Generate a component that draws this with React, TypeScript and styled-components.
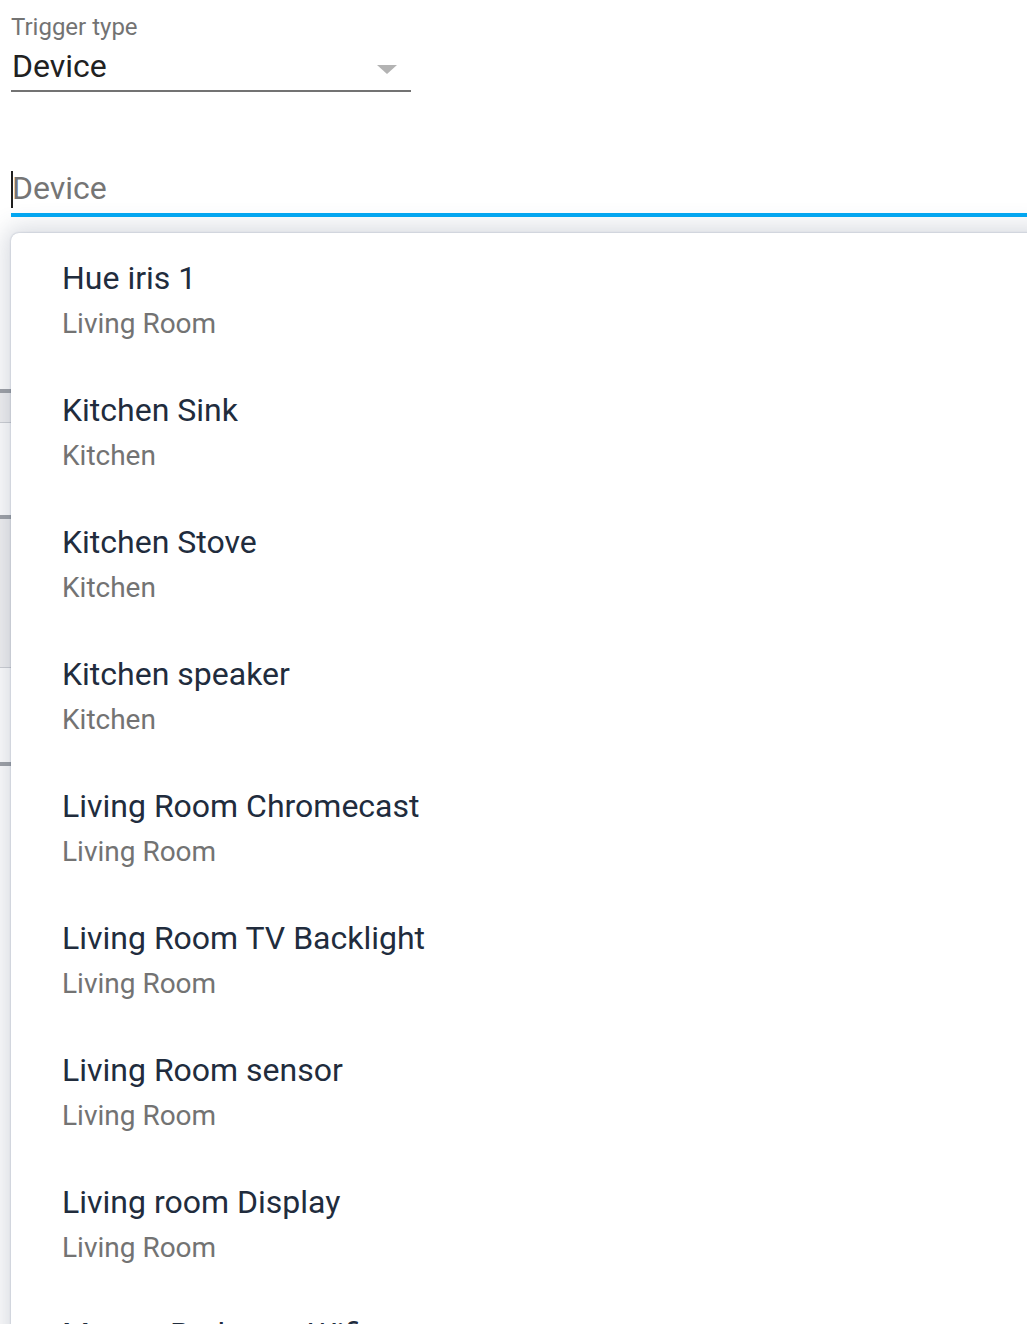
import React from "react";
import styled, { createGlobalStyle } from "styled-components";

const GlobalStyle = createGlobalStyle`
  html, body {
    margin: 0;
    padding: 0;
    background: #ffffff;
    overflow: hidden;
  }
  body {
    font-family: Roboto, "Noto Sans", "Liberation Sans", sans-serif;
    -webkit-font-smoothing: antialiased;
  }
`;

const Page = styled.div`
  position: relative;
  width: 100%;
  height: 1324px;
  overflow: hidden;
`;

const Form = styled.div`
  position: relative;
  z-index: 2;
  padding: 15px 0 0 11px;
`;

const SelectField = styled.div`
  width: 400px;
`;

const FieldLabel = styled.div`
  font-size: 24px;
  line-height: 24px;
  color: #737373;
`;

const SelectRow = styled.div`
  display: flex;
  justify-content: space-between;
  align-items: flex-start;
  margin-top: 7px;
  padding: 0 14px 4px 1px;
  border-bottom: 2px solid #737373;
`;

const SelectValue = styled.div`
  font-size: 32px;
  line-height: 40px;
  color: #212121;
`;

const Arrow = styled.span`
  width: 0;
  height: 0;
  margin-top: 19px;
  border-left: 10px solid transparent;
  border-right: 10px solid transparent;
  border-top: 9px solid #b3b3b3;
`;

const InputField = styled.div`
  position: relative;
  margin-top: 76px;
`;

const InputRow = styled.div`
  position: relative;
  padding: 0 0 5px 1px;
  border-bottom: 4px solid #03a9f4;
`;

const Placeholder = styled.div`
  font-size: 32px;
  line-height: 40px;
  color: #757575;
`;

const Caret = styled.span`
  position: absolute;
  left: 0;
  top: 3px;
  width: 2px;
  height: 37px;
  background: #1f1f1f;
`;

const Dropdown = styled.ul`
  position: absolute;
  top: calc(100% + 16px);
  left: 0;
  right: -24px;
  margin: 0;
  padding: 0;
  list-style: none;
  background: #ffffff;
  border-radius: 8px;
  box-shadow: 0 0 2px rgba(60, 80, 120, 0.4), 0 0 24px 6px rgba(60, 75, 105, 0.2);
`;

const Option = styled.li`
  box-sizing: border-box;
  height: 132px;
  padding: 25px 0 0 51px;
`;

const Primary = styled.div`
  font-size: 32px;
  line-height: 40px;
  color: #212c3d;
  white-space: nowrap;
`;

const Secondary = styled.div`
  margin-top: 6px;
  font-size: 28px;
  line-height: 40px;
  color: #737373;
  white-space: nowrap;
`;

const Behind = styled.div`
  position: absolute;
  top: 389px;
  left: 0;
  right: 0;
  z-index: 1;
`;

const Panel = styled.div<{ $height: number }>`
  height: ${(p) => p.$height}px;
  border-top: 4px solid #a0a3a8;
  box-sizing: border-box;
`;

const PanelHeader = styled.div<{ $height: number }>`
  height: ${(p) => p.$height}px;
  background: #f1f1f2;
  border-bottom: 1px solid #cfd1d5;
`;

const devices = [
  { name: "Hue iris 1", area: "Living Room" },
  { name: "Kitchen Sink", area: "Kitchen" },
  { name: "Kitchen Stove", area: "Kitchen" },
  { name: "Kitchen speaker", area: "Kitchen" },
  { name: "Living Room Chromecast", area: "Living Room" },
  { name: "Living Room TV Backlight", area: "Living Room" },
  { name: "Living Room sensor", area: "Living Room" },
  { name: "Living room Display", area: "Living Room" },
  { name: "Master Bedroom Wifi", area: "Master Bedroom" },
];

const App: React.FC = () => {
  return (
    <Page>
      <GlobalStyle />
      <Behind>
        <Panel $height={126}>
          <PanelHeader $height={29} />
        </Panel>
        <Panel $height={247}>
          <PanelHeader $height={148} />
        </Panel>
        <Panel $height={300} />
      </Behind>
      <Form>
        <SelectField>
          <FieldLabel>Trigger type</FieldLabel>
          <SelectRow>
            <SelectValue>Device</SelectValue>
            <Arrow />
          </SelectRow>
        </SelectField>

        <InputField>
          <InputRow>
            <Placeholder>Device</Placeholder>
            <Caret />
          </InputRow>
          <Dropdown>
            {devices.map((d) => (
              <Option key={d.name}>
                <Primary>{d.name}</Primary>
                <Secondary>{d.area}</Secondary>
              </Option>
            ))}
          </Dropdown>
        </InputField>
      </Form>
    </Page>
  );
};

export default App;
